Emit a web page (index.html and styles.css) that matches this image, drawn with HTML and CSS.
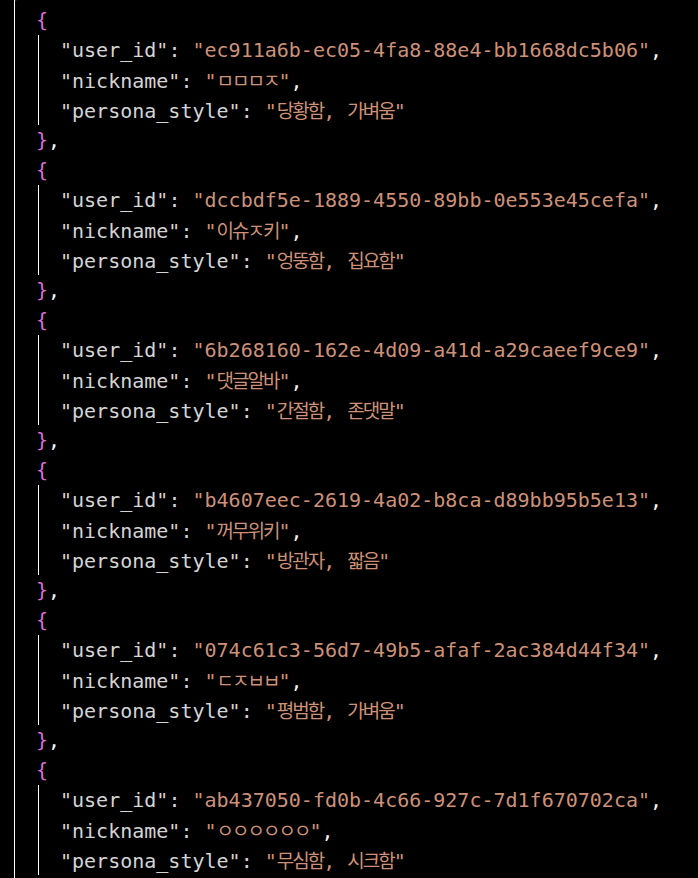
FILE: index.html
```html
<!DOCTYPE html>
<html lang="ko">
<head>
<meta charset="utf-8">
<title>users.json</title>
<link rel="stylesheet" href="styles.css">
</head>
<body>
<div class="editor">
  <div class="line"><span class="brace">}</span><span class="p">,</span></div>

  <div class="obj">
    <div class="line ind1"><span class="brace">{</span></div>
    <div class="body">
      <div class="line ind2"><span class="k">"user_id"</span><span class="c">: </span><span class="s">"ec911a6b-ec05-4fa8-88e4-bb1668dc5b06"</span><span class="p">,</span></div>
      <div class="line ind2"><span class="k">"nickname"</span><span class="c">: </span><span class="s">"<span class="ko">ㅁㅁㅁㅈ</span>"</span><span class="p">,</span></div>
      <div class="line ind2"><span class="k">"persona_style"</span><span class="c">: </span><span class="s">"<span class="ko">당황함</span>, <span class="ko">가벼움</span>"</span></div>
    </div>
    <div class="line ind1"><span class="brace">}</span><span class="p">,</span></div>
  </div>

  <div class="obj">
    <div class="line ind1"><span class="brace">{</span></div>
    <div class="body">
      <div class="line ind2"><span class="k">"user_id"</span><span class="c">: </span><span class="s">"dccbdf5e-1889-4550-89bb-0e553e45cefa"</span><span class="p">,</span></div>
      <div class="line ind2"><span class="k">"nickname"</span><span class="c">: </span><span class="s">"<span class="ko">이슈ㅈ키</span>"</span><span class="p">,</span></div>
      <div class="line ind2"><span class="k">"persona_style"</span><span class="c">: </span><span class="s">"<span class="ko">엉뚱함</span>, <span class="ko">집요함</span>"</span></div>
    </div>
    <div class="line ind1"><span class="brace">}</span><span class="p">,</span></div>
  </div>

  <div class="obj">
    <div class="line ind1"><span class="brace">{</span></div>
    <div class="body">
      <div class="line ind2"><span class="k">"user_id"</span><span class="c">: </span><span class="s">"6b268160-162e-4d09-a41d-a29caeef9ce9"</span><span class="p">,</span></div>
      <div class="line ind2"><span class="k">"nickname"</span><span class="c">: </span><span class="s">"<span class="ko">댓글알바</span>"</span><span class="p">,</span></div>
      <div class="line ind2"><span class="k">"persona_style"</span><span class="c">: </span><span class="s">"<span class="ko">간절함</span>, <span class="ko">존댓말</span>"</span></div>
    </div>
    <div class="line ind1"><span class="brace">}</span><span class="p">,</span></div>
  </div>

  <div class="obj">
    <div class="line ind1"><span class="brace">{</span></div>
    <div class="body">
      <div class="line ind2"><span class="k">"user_id"</span><span class="c">: </span><span class="s">"b4607eec-2619-4a02-b8ca-d89bb95b5e13"</span><span class="p">,</span></div>
      <div class="line ind2"><span class="k">"nickname"</span><span class="c">: </span><span class="s">"<span class="ko">꺼무위키</span>"</span><span class="p">,</span></div>
      <div class="line ind2"><span class="k">"persona_style"</span><span class="c">: </span><span class="s">"<span class="ko">방관자</span>, <span class="ko">짧음</span>"</span></div>
    </div>
    <div class="line ind1"><span class="brace">}</span><span class="p">,</span></div>
  </div>

  <div class="obj">
    <div class="line ind1"><span class="brace">{</span></div>
    <div class="body">
      <div class="line ind2"><span class="k">"user_id"</span><span class="c">: </span><span class="s">"074c61c3-56d7-49b5-afaf-2ac384d44f34"</span><span class="p">,</span></div>
      <div class="line ind2"><span class="k">"nickname"</span><span class="c">: </span><span class="s">"<span class="ko">ㄷㅈㅂㅂ</span>"</span><span class="p">,</span></div>
      <div class="line ind2"><span class="k">"persona_style"</span><span class="c">: </span><span class="s">"<span class="ko">평범함</span>, <span class="ko">가벼움</span>"</span></div>
    </div>
    <div class="line ind1"><span class="brace">}</span><span class="p">,</span></div>
  </div>

  <div class="obj">
    <div class="line ind1"><span class="brace">{</span></div>
    <div class="body">
      <div class="line ind2"><span class="k">"user_id"</span><span class="c">: </span><span class="s">"ab437050-fd0b-4c66-927c-7d1f670702ca"</span><span class="p">,</span></div>
      <div class="line ind2"><span class="k">"nickname"</span><span class="c">: </span><span class="s">"<span class="ko">ㅇㅇㅇㅇㅇㅇ</span>"</span><span class="p">,</span></div>
      <div class="line ind2"><span class="k">"persona_style"</span><span class="c">: </span><span class="s">"<span class="ko">무심함</span>, <span class="ko">시크함</span>"</span></div>
    </div>
    <div class="line ind1"><span class="brace">}</span></div>
  </div>
</div>
</body>
</html>
```
FILE: styles.css
```css
html, body {
  margin: 0;
  padding: 0;
  background: #000000;
  height: 878px;
  overflow: hidden;
}

.editor {
  margin-top: -25px;
  padding-left: 12px;
  font-family: "DejaVu Sans Mono", "Liberation Mono", "Noto Sans CJK KR", monospace;
  font-size: 20px;
  color: #d4d4d4;
  background: linear-gradient(#ffffff 0 0) 14px 0 / 1px 100% no-repeat;
  min-height: 1000px;
}

.line {
  height: 30px;
  line-height: 30px;
  white-space: pre;
}

.ind1 {
  padding-left: 24px;
}

.body {
  margin-left: 24px;
  padding-left: 24px;
  background: linear-gradient(#ffffff 0 0) 2px 0 / 1px 100% no-repeat;
}

.brace {
  color: #da70d6;
}

.k,
.c {
  color: #d4d4d4;
}

.p {
  color: #f4f4f4;
}

.s {
  color: #ce9178;
}

.ko {
  font-family: "Noto Sans CJK KR", sans-serif;
  font-size: 19px;
  letter-spacing: -2px;
}
```
